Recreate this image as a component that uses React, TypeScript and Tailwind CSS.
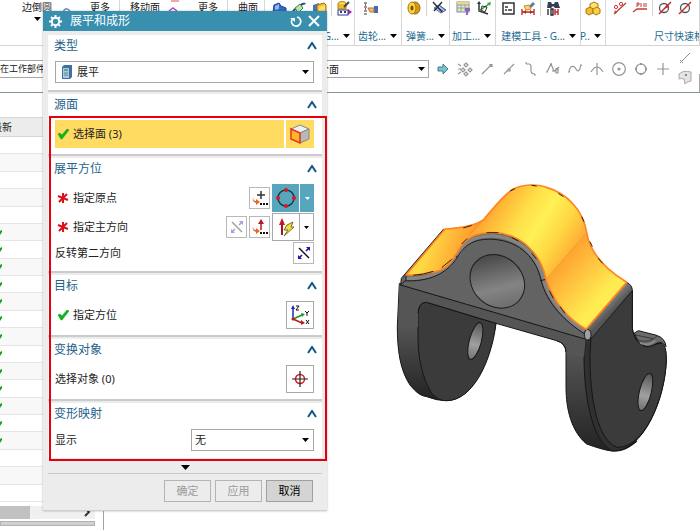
import React from "react";

type Kids = { children?: React.ReactNode };

const ARROW = "M0 0H7L3.5 4Z";

function Caret({ className = "fill-black" }: { className?: string }) {
  return (
    <svg width="7" height="4" viewBox="0 0 7 4" className={`shrink-0 ${className}`} aria-hidden="true">
      <path d={ARROW} />
    </svg>
  );
}

function Glyph({ children, size = 16 }: Kids & { size?: number }) {
  return (
    <svg width={size} height={size} viewBox="0 0 16 16" fill="none" className="shrink-0" aria-hidden="true">
      {children}
    </svg>
  );
}

/* ---------- ribbon ---------- */

const tools: Record<string, React.ReactNode> = {
  拉伸: (
    <>
      <path d="M3 5L8 3L10 6L15 8V12L9 15L2 12Z" fill="#3567c4" stroke="#1c3f91" />
      <path d="M4 6L8 4V9L4 10Z" fill="#8fb8f3" />
    </>
  ),
  扫掠: (
    <>
      <path d="M2 12C4 6 7 12 9 7S13 5 14 3" stroke="#2947a8" strokeWidth="2" />
      <path d="M4 8L9 4L12 8L7 13Z" fill="#c2e0a7" stroke="#3a8a35" />
      <path d="M2 14H8" stroke="#5b42bd" strokeWidth="2" />
    </>
  ),
  块: (
    <>
      <path d="M2 5L8 3V12L2 14Z" fill="#3f73cc" />
      <path d="M6 5L13 3L15 5V12L8 14L6 12Z" fill="#f7bd2a" stroke="#a46f0a" />
      <path d="M8 7V14L14 12V5Z" fill="#ffdd66" />
    </>
  ),
  标准件: (
    <>
      <ellipse cx="6" cy="4" rx="4" ry="2.5" fill="#ffdc55" stroke="#b27e0f" />
      <path d="M2 4V9H10V4" fill="#f0b92d" stroke="#b27e0f" />
      <path d="M8 7L13 2" stroke="#444" strokeWidth="2" />
      <rect x="2" y="10" width="10" height="5" fill="#fff" stroke="#333a86" />
      <path d="M4 12H6M8 12H10" stroke="#3436a0" strokeWidth="2" />
      <path d="M12 9L16 12L12 15Z" fill="#9d25aa" />
    </>
  ),
  齿轮: (
    <>
      <path d="M1 3H4M1 7H4M1 11H4M1 14H4" stroke="#333" />
      <path d="M2 5H3M2 9H3" stroke="#e13a32" strokeWidth="2" />
      <rect x="11" y="6" width="4" height="7" fill="#4769b4" />
      <path d="M5 8H11V12H7Z" fill="#f2bd72" stroke="#a77735" />
    </>
  ),
  弹簧: (
    <>
      <ellipse cx="9" cy="8" rx="5" ry="6" fill="#d69b12" stroke="#93680a" />
      <ellipse cx="6" cy="8" rx="4" ry="6" fill="#ffd23e" stroke="#a2750c" />
      <ellipse cx="6" cy="8" rx="1.5" ry="2.5" fill="#6e4f0b" />
    </>
  ),
  删除弹簧: (
    <>
      <path d="M3 8L10 13L15 10L8 5Z" fill="#b8cbe7" stroke="#4b659c" />
      <path d="M6 7L12 11M9 6L14 10" stroke="#4b659c" />
      <path d="M2 2L11 12M11 2L3 11" stroke="#262e40" strokeWidth="1.4" />
    </>
  ),
  加工表: (
    <>
      <rect x="1" y="2" width="12" height="10" fill="#dbe7d0" stroke="#8a8a8a" />
      <path d="M1 5H13M1 8H13M5 2V12M9 2V12" stroke="#9ba69a" />
      <path d="M1 2H13V4H1Z" fill="#f4d777" />
      <path d="M9 8H14V11H12V15H10V11H9Z" fill="#8c62c2" />
    </>
  ),
  坐标: (
    <>
      <path d="M3 3V11L12 14" stroke="#333" strokeWidth="1.5" />
      <path d="M3 11L13 4" stroke="#2c9a40" strokeWidth="1.5" />
      <path d="M6 6L11 7L9 12L5 10Z" stroke="#333" />
      <path d="M1 4L3 1L5 4Z" fill="#333" />
      <path d="M11 3L15 2L14 6Z" fill="#2eac45" />
    </>
  ),
  属性: (
    <>
      <rect x="3" y="3" width="11" height="11" fill="#fff" stroke="#333" strokeWidth="1.5" />
      <path d="M5 7H8M5 10H7M8 10H12" stroke="#333" strokeWidth="1.5" />
    </>
  ),
  测量: (
    <>
      <path d="M8 7L13 2L15 4L10 9Z" fill="#6277a5" />
      <path d="M4 6L9 5L11 9L6 10Z" fill="#ffd66b" stroke="#c49126" />
      <path d="M2 9V15M14 9V15M2 12H14" stroke="#bd2323" strokeWidth="1.3" />
      <path d="M3 12L6 10V14ZM13 12L10 10V14Z" fill="#bd2323" />
    </>
  ),
  公差查询: (
    <>
      <path d="M3 2H6L7 4H9L10 2H13L15 8H10L8 6L6 8H2Z" fill="#353d55" />
      <path d="M3 9V15M6 9H8V15H6Z" stroke="#222" strokeWidth="1.3" />
      <path d="M10 9V15M13 9V15M10 12H13" stroke="#cb2323" strokeWidth="1.4" />
    </>
  ),
  部件: (
    <>
      <path d="M5 4L9 2L13 4V8L9 10L5 8Z" fill="#ffe073" stroke="#a8780b" />
      <path d="M1 9L5 7L8 9V13L4 15L1 13Z" fill="#f2bd2f" stroke="#a8780b" />
      <path d="M8 9L12 7L15 9V13L11 15L8 13Z" fill="#ffcf3f" stroke="#a8780b" />
    </>
  ),
  尺寸线: (
    <>
      <path d="M2 14L14 3" stroke="#c43a3a" strokeWidth="1.3" />
      <circle cx="4" cy="7" r="1.6" stroke="#c43a3a" />
      <circle cx="9" cy="4" r="1.6" stroke="#c43a3a" />
      <path d="M2 14L3 10L5 13Z" fill="#c43a3a" />
    </>
  ),
  引出线: (
    <>
      <path d="M1 12L5 9H15" stroke="#c43a3a" strokeWidth="1.3" />
      <path d="M5 3V7M5 3H7V5H5M9 3V7M12 3V7M14 3V7" stroke="#c43a3a" />
    </>
  ),
  直径: (
    <>
      <circle cx="7" cy="8" r="4.5" stroke="#555" strokeWidth="1.3" />
      <path d="M2 14L14 2" stroke="#c42b2b" strokeWidth="1.4" />
      <path d="M7 9L12 7L10 4Z" fill="#c42b2b" />
    </>
  ),
  直径线: (
    <>
      <circle cx="8" cy="8" r="4.5" stroke="#555" strokeWidth="1.3" />
      <path d="M2 14L14 2" stroke="#c42b2b" strokeWidth="1.4" />
    </>
  ),
};

function Tool({ name }: { name: string }) {
  return (
    <button type="button" aria-label={name} className="shrink-0">
      <Glyph>{tools[name]}</Glyph>
    </button>
  );
}

function Divider() {
  return <span className="h-4 w-px shrink-0 bg-[#d4d4d4]" />;
}

function Group({ label, width, pad, menu = true, children }: Kids & { label?: string; width: string; pad: string; menu?: boolean }) {
  return (
    <div className={`flex flex-col justify-between overflow-hidden border-r border-[#d8d8d8] pb-px ${width}`}>
      <div className={`flex items-start gap-1 ${pad}`}>{children}</div>
      {label && (
        <button
          type="button"
          className={`flex items-center gap-1 whitespace-nowrap leading-4 text-[#1d6b92] ${menu ? "justify-end pr-1" : "pl-12"}`}
        >
          {label}
          {menu && <Caret />}
        </button>
      )}
    </div>
  );
}

function Ribbon() {
  return (
    <header className="flex h-[46px] border-b border-[#d4d4d4] text-[10px] leading-[14px] text-[#222]">
      <Group width="w-[120px] shrink-0" pad="pl-[22px]">
        <button type="button" className="flex flex-col items-center gap-[3px] whitespace-nowrap">
          边倒圆
          <Caret />
        </button>
        <svg width="30" height="14" viewBox="0 0 30 14" fill="none" aria-hidden="true">
          <path d="M7 12Q10 6 14 11" stroke="#6f82bd" strokeWidth="1.5" />
        </svg>
        <button type="button" className="whitespace-nowrap">更多</button>
      </Group>
      <Group width="w-[108px] shrink-0" pad="pl-2.5">
        <button type="button" className="whitespace-nowrap">移动面</button>
        <svg width="30" height="14" viewBox="0 0 30 14" fill="none" aria-hidden="true">
          <path d="M5 11L9 8L13 11" stroke="#a94cc0" strokeWidth="1.5" />
          <path d="M7 1H15" stroke="#d25555" />
        </svg>
        <button type="button" className="whitespace-nowrap">更多</button>
      </Group>
      <Group width="w-[37px] shrink-0" pad="pl-2.5">
        <button type="button" className="whitespace-nowrap">曲面</button>
      </Group>
      <Group label="G..." width="w-[90px] shrink-0" pad="pl-1.5">
        <Tool name="拉伸" />
        <Tool name="扫掠" />
        <Tool name="块" />
        <Divider />
        <Tool name="标准件" />
      </Group>
      <Group label="齿轮..." width="w-[47px] shrink-0" pad="pl-2">
        <Tool name="齿轮" />
      </Group>
      <Group label="弹簧..." width="w-[48px] shrink-0" pad="pl-1">
        <Tool name="弹簧" />
        <Divider />
        <Tool name="删除弹簧" />
      </Group>
      <Group label="加工..." width="w-[46px] shrink-0" pad="pl-1.5">
        <Tool name="加工表" />
        <Tool name="坐标" />
      </Group>
      <Group label="建模工具 - G..." width="w-[85px] shrink-0" pad="pl-1">
        <Tool name="属性" />
        <Tool name="测量" />
        <Divider />
        <Tool name="公差查询" />
      </Group>
      <Group label="P.." width="w-[25px] shrink-0" pad="pl-1">
        <Tool name="部件" />
      </Group>
      <Group label="尺寸快速格式化" width="min-w-0 flex-1" pad="pl-1.5" menu={false}>
        <Tool name="尺寸线" />
        <Tool name="引出线" />
        <Divider />
        <Tool name="直径" />
        <Tool name="直径线" />
      </Group>
    </header>
  );
}

/* ---------- selection bar ---------- */

const snaps: [string, React.ReactNode][] = [
  ["捕捉点", <path d="M1 3L4 5M1 8H4M1 13L4 11M9 2L11 4L9 6L7 4ZM6 7L8 9L6 11L4 9ZM13 7L15 9L13 11L11 9ZM9 11L11 13L9 15L7 13Z" />],
  ["端点", <path d="M3 13L12 4M11 3.5H13V5.5H11Z" />],
  ["中点", <path d="M3 13L13 3M7 8H9V10H7Z" />],
  ["控制点", <path d="M3 3H6Q8 3 8 6V10Q8 13 12 13M11 14H13M2 2H4" />],
  ["极点", <path d="M2 11L6 3L9 10L14 6M1 11H3M5 3H7M7 10H11M11 7V12H13V7" />],
  ["样条点", <path d="M2 11C3 4 7 4 9 8S13 9 14 4M1 11H3M13 4H15" />],
  ["交点", <path d="M2 11Q8 1 14 11M8 2V14" />],
  ["圆心", <><circle cx="8" cy="8" r="6.3" /><circle cx="8" cy="8" r="1" fill="#8c8c8c" /></>],
  ["象限点", <><circle cx="8" cy="8" r="5" /><path d="M8 2V4M8 12V14M2 8H4M12 8H14" strokeWidth="2.4" /></>],
  ["现有点", <path d="M8 2V14M2 8H14" />],
];

function SelectionBar() {
  return (
    <div className="flex h-[47px] items-center overflow-hidden border-b border-[#839496] text-[10px] text-[#222]">
      <select aria-label="选择范围" className="h-[18px] w-[300px] shrink-0 appearance-none border-y border-[#a6a6a6] bg-white text-[9px]">
        <option>在工作部件内</option>
      </select>
      <div className="relative ml-1 flex shrink-0 items-center">
        <select aria-label="面规则" className="h-[18px] w-[125px] appearance-none border border-[#a6a6a6] bg-white pl-1">
          <option>单个面</option>
        </select>
        <Caret className="pointer-events-none absolute right-1 fill-black" />
      </div>
      <div className="ml-1.5 flex items-center gap-1.5">
        <button type="button" aria-label="应用规则">
          <Glyph>
            <path d="M3 6H8V3L13 8L8 13V10H3Z" fill="#7ec0cc" stroke="#3f7f92" />
          </Glyph>
        </button>
        {snaps.map(([name, art]) => (
          <button type="button" key={name} aria-label={name}>
            <Glyph>
              <g stroke="#959595" strokeWidth="1.2">{art}</g>
            </Glyph>
          </button>
        ))}
        <div className="flex flex-col gap-[3px] pb-1">
          <button type="button" aria-label="曲线上的点">
            <Glyph>
              <path d="M3 13L13 3M3 10L6 13" stroke="#8c8c8c" />
            </Glyph>
          </button>
          <button type="button" aria-label="面上的点">
            <Glyph>
              <path d="M2 5Q6 1 14 3V12Q9 13 8 15L7 10Q4 9 2 10Z" fill="#e4e4e4" stroke="#aaa" />
              <circle cx="9" cy="6" r="1" fill="#666" />
            </Glyph>
          </button>
        </div>
        <button type="button" aria-label="更多捕捉选项" className="mt-7 h-[18px] w-5 shrink-0 border border-[#a6a6a6]" />
      </div>
    </div>
  );
}

/* ---------- part navigator ---------- */

function Navigator() {
  const rows = Array.from({ length: 21 }, (_, i) => i);
  return (
    <aside className="flex w-[104px] shrink-0 flex-col border-r border-[#9aa3a8] pt-6 text-[10px]">
      <div className="h-5 shrink-0 border-y border-[#d6d6d6] bg-[#ececec] leading-[18px] text-[#222]">
        <span className="-ml-2 block">最新</span>
      </div>
      <ul className="flex flex-1 flex-col">
        {rows.map((i) => (
          <li key={i} className="flex flex-1 items-center border-b border-[#e6e6e6] even:bg-[#f8f8f8]">
            {i > 4 && i < 18 && (
              <svg width="3" height="5" viewBox="0 0 3 5" aria-hidden="true">
                <path d="M0 1L2 0L2 2L0 5Z" fill="#0aa514" />
              </svg>
            )}
          </li>
        ))}
      </ul>
      <div className="mt-1 mr-2 flex h-[13px] items-center justify-between bg-[#f0f0f0]">
        <span className="h-full w-[30px] bg-[#c1c1c1]" />
        <svg width="12" height="9" viewBox="0 0 12 9" fill="none" aria-hidden="true">
          <path d="M2 0L6 4L2 8" stroke="#333" strokeWidth="2" />
        </svg>
      </div>
      <div className="mt-0.5 mr-2 mb-1 h-[5px] border border-[#b2b2b2] bg-[#d0d0d0]" />
    </aside>
  );
}

/* ---------- 3D view ---------- */

function Bracket() {
  return (
    <svg width="290" height="290" viewBox="0 0 870 870" fill="none" strokeLinejoin="round" role="img" aria-label="支架模型">
      <defs>
        <linearGradient id="leg" x1="0" y1="340" x2="0" y2="840" gradientUnits="userSpaceOnUse">
          <stop stopColor="#4c4c4c" />
          <stop offset=".35" stopColor="#5a5a5a" />
          <stop offset="1" stopColor="#242424" />
        </linearGradient>
        <linearGradient id="legL" x1="0" y1="340" x2="0" y2="690" gradientUnits="userSpaceOnUse">
          <stop stopColor="#484848" />
          <stop offset=".3" stopColor="#5a5a5a" />
          <stop offset="1" stopColor="#222" />
        </linearGradient>
        <linearGradient id="wingL" x1="110" y1="235" x2="225" y2="275" gradientUnits="userSpaceOnUse">
          <stop stopColor="#ffd944" />
          <stop offset="1" stopColor="#ff9a2c" />
        </linearGradient>
        <linearGradient id="crown" x1="265" y1="130" x2="545" y2="310" gradientUnits="userSpaceOnUse">
          <stop stopColor="#ff9c2c" />
          <stop offset=".35" stopColor="#ffe048" />
          <stop offset=".52" stopColor="#fff056" />
          <stop offset=".7" stopColor="#ffd944" />
          <stop offset="1" stopColor="#ff9c2e" />
        </linearGradient>
        <linearGradient id="wingR" x1="520" y1="265" x2="640" y2="375" gradientUnits="userSpaceOnUse">
          <stop stopColor="#ffa330" />
          <stop offset="1" stopColor="#ffec52" />
        </linearGradient>
        <linearGradient id="bore" x1="250" y1="290" x2="395" y2="390" gradientUnits="userSpaceOnUse">
          <stop stopColor="#474747" />
          <stop offset=".6" stopColor="#848484" />
          <stop offset="1" stopColor="#6a6a6a" />
        </linearGradient>
        <linearGradient id="pin" x1="0" y1="0" x2="0" y2="1">
          <stop stopColor="#555" />
          <stop offset=".6" stopColor="#a0a0a0" />
          <stop offset="1" stopColor="#707070" />
        </linearGradient>
        <linearGradient id="edge" x1="640" y1="400" x2="665" y2="425" gradientUnits="userSpaceOnUse">
          <stop stopColor="#8a8a8a" />
          <stop offset="1" stopColor="#555" />
        </linearGradient>
      </defs>
      {/* left leg */}
      <path d="M28 340L22 470C22 540 30 600 60 645C80 670 95 678 110 680Q140 692 170 692C250 690 300 570 318 458L110 380Z" fill="url(#legL)" stroke="#161616" strokeWidth="3" />
      <path d="M84 430Q86 395 110 397L318 460C305 570 250 692 170 692C150 692 140 685 125 670C95 620 84 560 84 500Z" fill="#3b3b3b" stroke="#161616" strokeWidth="3" />
      <ellipse cx="256" cy="513" rx="18" ry="57" transform="rotate(15 256 513)" fill="url(#pin)" stroke="#161616" strokeWidth="3" />
      {/* right leg */}
      <path d="M500 512Q528 520 528 550V650C528 720 545 785 590 822Q640 840 665 843C700 846 720 830 740 815L600 500Z" fill="url(#leg)" stroke="#161616" strokeWidth="3" />
      <path d="M588 500L727 360V470C728 490 735 500 745 512L800 520Q829 510 829 570C825 690 760 845 668 843C610 820 582 690 582 560Z" fill="#303030" stroke="#161616" strokeWidth="3" />
      <path d="M603 500L727 362V470C727 500 745 525 770 530C800 530 829 490 829 570C825 690 760 835 682 832C620 810 600 680 600 560Z" fill="#3b3b3b" stroke="#161616" strokeWidth="3" />
      <path d="M733 489L745 482L800 496Q826 505 828 530Q815 508 796 522Q770 540 745 516Z" fill="#6b6b6b" stroke="#161616" strokeWidth="3" />
      <path d="M737 495L790 506M740 508Q765 520 788 508L803 498" stroke="#222" strokeWidth="2" />
      <path d="M750 519Q775 530 796 512" stroke="#8c8c8c" strokeWidth="5" />
      <ellipse cx="766" cy="666" rx="18" ry="57" transform="rotate(14 766 666)" fill="url(#pin)" stroke="#161616" strokeWidth="3" />
      {/* lower band and front plate */}
      <path d="M28 340L588 500L582 560L528 550Q528 520 500 512L318 460L110 397Q86 395 84 430V470H24Z" fill="#555" />
      <path d="M84 430Q86 395 110 397L318 460L500 512Q528 520 528 545" stroke="#161616" strokeWidth="3" />
      <path d="M32 345L40 318L48 315C120 320 170 300 200 250C225 200 260 188 310 188C400 192 455 260 468 328C490 400 540 450 588 478L595 510Z" fill="#636363" stroke="#161616" strokeWidth="3" />
      <path d="M46 325C120 328 172 305 203 254C230 207 265 197 310 198C395 202 448 265 461 330C480 395 530 450 583 483" stroke="#858585" strokeWidth="11" />
      <path d="M40 332C115 337 170 312 202 262C230 212 270 206 310 208C395 214 440 270 453 330C470 400 525 455 585 492" stroke="#1c1c1c" strokeWidth="3" />
      <path d="M190 250L204 263M450 332L470 328" stroke="#1c1c1c" strokeWidth="3" />
      <ellipse cx="322" cy="334" rx="87" ry="75" transform="rotate(42 322 334)" fill="url(#bore)" stroke="#1c1c1c" strokeWidth="3" />
      {/* rounded outer edges */}
      <path d="M32 345L34 325L160 178L168 180L48 316V330Z" fill="#666" stroke="#1c1c1c" strokeWidth="3" />
      <path d="M588 478L710 337Q727 345 727 362L607 502L595 510Q580 500 588 478Z" fill="url(#edge)" stroke="#1c1c1c" strokeWidth="3" />
      <ellipse cx="593" cy="494" rx="10" ry="16" fill="#a0a0a0" stroke="#1c1c1c" strokeWidth="3" />
      {/* highlighted faces */}
      <path d="M48 315L165 177C205 175 250 170 280 150L237 200Q212 222 200 250C175 290 160 303 120 308Q90 317 48 315Z" fill="url(#wingL)" />
      <path d="M280 150C310 115 340 75 370 57C400 42 440 42 470 52C530 70 580 120 590 188L468 328C455 260 400 190 310 188Q265 188 233 204L235 196Z" fill="url(#crown)" />
      <path d="M590 188C600 250 650 300 710 337L588 478C540 450 490 400 468 328Z" fill="url(#wingR)" />
      <path d="M280 150L235 198M590 188L468 328" stroke="#e98a20" strokeWidth="2" />
      <path d="M48 315L165 177C205 175 250 170 280 150C310 115 340 75 370 57C400 42 440 42 470 52C530 70 580 120 590 188C600 250 650 300 710 337L588 478C540 450 490 400 468 328C455 260 400 190 310 188C260 188 225 200 200 250C175 290 160 303 120 308Q90 317 48 315Z" stroke="#ff8420" strokeWidth="5" />
      <path d="M70 316Q100 314 130 304M155 293L185 268M215 222L232 205M290 188H325M365 203L385 213M425 250L440 268M478 362L490 385M510 410L525 430M220 174L245 166M360 63L375 56M425 46L440 48M505 70L520 80M575 140L582 155M600 215L607 230M625 265L638 280" stroke="#2e2410" strokeWidth="3" />
    </svg>
  );
}

/* ---------- dialog ---------- */

function Section({ title, className = "mb-0.5 border-b-2 pb-1.5", children }: Kids & { title: string; className?: string }) {
  return (
    <section className={`border-[#cbcbcb] bg-white pr-2 pl-[7px] ${className}`}>
      <h2>
        <button type="button" className="-ml-px mb-1 flex h-[22px] w-full items-center justify-between text-[12px] text-[#1d628a]">
          {title}
          <svg width="10" height="8" viewBox="0 0 10 8" fill="none" className="-mr-1" aria-hidden="true">
            <path d="M1 7L5 1L9 7" stroke="#135780" strokeWidth="2" />
          </svg>
        </button>
      </h2>
      {children}
    </section>
  );
}

function Check() {
  return (
    <svg width="12" height="12" viewBox="0 0 12 12" className="shrink-0" aria-hidden="true">
      <path d="M1 6L3 5L5 7L10 1L12 2L5 11H4Z" fill="#10b51b" stroke="#0a9a14" strokeWidth=".5" />
    </svg>
  );
}

function Star() {
  return (
    <svg width="12" height="12" viewBox="0 0 12 12" className="shrink-0" aria-hidden="true">
      <path d="M6 1V11M1 4L11 8M2 10L10 2" stroke="#d9111b" strokeWidth="2" />
    </svg>
  );
}

function Row({ mark, label, children }: Kids & { mark?: React.ReactNode; label: string }) {
  return (
    <div className="flex items-center gap-0.5">
      <span className="flex flex-1 items-center gap-1">
        {mark && <span className="ml-0.5">{mark}</span>}
        {label}
      </span>
      {children}
    </div>
  );
}

function ToolButton({ label, big, dim, children }: Kids & { label: string; big?: boolean; dim?: boolean }) {
  return (
    <button
      type="button"
      aria-label={label}
      disabled={dim}
      className={`flex shrink-0 items-center justify-center border bg-white ${big ? "size-7 border-[#a9a9a9]" : "h-[22px] w-[21px] border-[#b8b8b8]"}`}
    >
      {children}
    </button>
  );
}

function Flip({ dim }: { dim?: boolean }) {
  return (
    <Glyph>
      <g opacity={dim ? 0.4 : 1}>
        <path d="M3 3L13 13" stroke="#111" strokeWidth="1.4" />
        <path d="M10 6L13 3M6 10L3 13" stroke="#1717a5" strokeWidth="1.6" />
        <path d="M10 2H14V6ZM2 10V14H6Z" fill="#1717a5" />
      </g>
    </Glyph>
  );
}

function Dialog() {
  return (
    <div
      role="dialog"
      aria-label="展平和成形"
      className="absolute top-[11px] left-[43px] w-[284px] border-b border-[#cfcfcf] bg-[#ececec] text-[11px] leading-4 text-[#222] shadow-[0_0_2px_rgba(0,0,0,0.3)]"
    >
      <div className="flex h-5 items-center bg-[#388fae] pr-[7px] pl-1.5 text-[12px] text-white">
        <svg width="13" height="13" viewBox="0 0 13 13" fill="none" aria-hidden="true">
          <circle cx="6.5" cy="6.5" r="3.7" stroke="white" strokeWidth="2" />
          <path d="M6.5 0V2M6.5 11V13M0 6.5H2M11 6.5H13M2 2L3.4 3.4M9.6 9.6L11 11M11 2L9.6 3.4M3.4 9.6L2 11" stroke="white" strokeWidth="2" />
        </svg>
        <h1 className="flex-1 pl-2">展平和成形</h1>
        <button type="button" aria-label="重置" className="mr-1.5">
          <svg width="12" height="12" viewBox="0 0 12 12" fill="none" className="block" aria-hidden="true">
            <path d="M2 4.5A4.6 4.6 0 1 0 7 2" stroke="white" strokeWidth="1.7" />
            <path d="M0 3H5V7Z" fill="white" />
          </svg>
        </button>
        <button type="button" aria-label="关闭">
          <svg width="12" height="12" viewBox="0 0 12 12" fill="none" className="block" aria-hidden="true">
            <path d="M1 1L11 11M11 1L1 11" stroke="white" strokeWidth="2" />
          </svg>
        </button>
      </div>
      <div className="px-[5px] pt-1">
        <Section title="类型" className="mb-0.5 border-b-2 pb-[7px]">
          <div className="relative flex items-center">
            <svg width="12" height="14" viewBox="0 0 12 14" className="pointer-events-none absolute left-1.5" aria-hidden="true">
              <path d="M1 2L3 0H11V12L9 14H1Z" fill="#416f9f" />
              <path d="M2 3H8V13H2Z" fill="#adc9e0" />
              <path d="M3 4H7V6H3Z" fill="#47b587" />
              <path d="M3 8H7M3 10H7" stroke="#5c83ab" />
            </svg>
            <select aria-label="类型" className="h-[22px] w-full appearance-none border border-[#a6a6a6] bg-white pl-[21px]">
              <option>展平</option>
            </select>
            <Caret className="pointer-events-none absolute right-[5px] fill-black" />
          </div>
        </Section>
        <Section title="源面">
          <div className="flex gap-0.5">
            <button type="button" className="flex h-7 flex-1 items-center gap-1 bg-[#ffdb62] pl-0.5">
              <Check />
              选择面 (3)
            </button>
            <button type="button" aria-label="面" className="flex size-7 items-center justify-center bg-[#ffdb62]">
              <svg width="20" height="20" viewBox="0 0 20 20" aria-hidden="true">
                <path d="M1 5L10 1L19 5L10 9Z" fill="#f0f0f0" stroke="#888" />
                <path d="M10 9L19 5V15L10 19Z" fill="#b8b8bb" stroke="#888" />
                <path d="M1 5L10 9V19L1 15Z" fill="#ffb82b" stroke="#e9341c" strokeWidth="1.5" />
              </svg>
            </button>
          </div>
        </Section>
        <Section title="展平方位" className="mb-0.5 border-b-2 pb-[7px]">
          <div className="flex flex-col gap-px">
            <Row mark={<Star />} label="指定原点">
              <ToolButton label="点对话框">
                <Glyph>
                  <path d="M9 1V9M5 5H13" stroke="#333" strokeWidth="1.5" />
                  <path d="M1 7Q1 11 4 11V9L8 12L4 15V13Q0 12 1 7Z" fill="#ea6526" />
                  <path d="M8 14H10M11 14H13M14 14H16" stroke="#111" strokeWidth="2" />
                </Glyph>
              </ToolButton>
              <div className="flex h-7 bg-[#58a6be] text-white">
                <button type="button" aria-label="象限点" className="flex w-7 items-center justify-center border-r border-white">
                  <svg width="20" height="20" viewBox="0 0 20 20" aria-hidden="true">
                    <circle cx="10" cy="10" r="8" fill="none" stroke="#173743" strokeWidth="1.5" />
                    <g fill="#d81520">
                      <circle cx="10" cy="2" r="2" />
                      <circle cx="10" cy="18" r="2" />
                      <circle cx="2" cy="10" r="2" />
                      <circle cx="18" cy="10" r="2" />
                    </g>
                  </svg>
                </button>
                <button type="button" aria-label="更多点选项" className="flex w-3.5 items-center justify-center">
                  <svg width="5" height="3" viewBox="0 0 7 4" className="fill-white" aria-hidden="true"><path d={ARROW} /></svg>
                </button>
              </div>
            </Row>
            <Row mark={<Star />} label="指定主方向">
              <ToolButton label="反向" dim>
                <Flip dim />
              </ToolButton>
              <ToolButton label="矢量对话框">
                <Glyph>
                  <path d="M9 11V4" stroke="#b81822" strokeWidth="1.5" />
                  <path d="M6 5L9 0L12 5Z" fill="#b81822" />
                  <path d="M1 7Q1 11 4 11V9L8 12L4 15V13Q0 12 1 7Z" fill="#ea6526" />
                  <path d="M8 14H10M11 14H13M14 14H16" stroke="#111" strokeWidth="2" />
                </Glyph>
              </ToolButton>
              <div className="flex h-7 border border-[#a9a9a9] bg-white">
                <button type="button" aria-label="自动判断的矢量" className="flex w-[27px] items-center justify-center border-r border-[#a9a9a9]">
                  <svg width="20" height="20" viewBox="0 0 20 20" aria-hidden="true">
                    <path d="M6 18V6" stroke="#9d1720" strokeWidth="2" />
                    <path d="M3 8L6 1L9 8Z" fill="#c61520" />
                    <path d="M11 8L17 5L15 10L18 10L8 19L12 13H8Z" fill="#f3dc43" stroke="#77711f" />
                  </svg>
                </button>
                <button type="button" aria-label="更多矢量选项" className="flex w-[13px] items-center justify-center">
                  <svg width="5" height="3" viewBox="0 0 7 4" aria-hidden="true"><path d={ARROW} /></svg>
                </button>
              </div>
            </Row>
            <Row label="反转第二方向">
              <ToolButton label="反转第二方向">
                <Flip />
              </ToolButton>
            </Row>
          </div>
        </Section>
        <Section title="目标">
          <Row mark={<Check />} label="指定方位">
            <ToolButton label="坐标系" big>
              <svg width="20" height="20" viewBox="0 0 20 20" fill="none" aria-hidden="true">
                <path d="M3 14V3" stroke="#2424b8" strokeWidth="1.5" />
                <path d="M1 4L3 0L5 4Z" fill="#2424b8" />
                <path d="M3 14L12 10" stroke="#21952a" strokeWidth="1.5" />
                <path d="M11 8L15 9L12 12Z" fill="#21952a" />
                <path d="M3 14L12 18" stroke="#b61b1b" strokeWidth="1.5" />
                <path d="M11 15L15 18L11 20Z" fill="#b61b1b" />
                <circle cx="3" cy="14" r="1.5" fill="#c11616" />
                <path d="M6 1H9L6 5H9M15 6L17 8L19 6M17 8V11M16 15L19 19M19 15L16 19" stroke="#111" />
              </svg>
            </ToolButton>
          </Row>
        </Section>
        <Section title="变换对象">
          <Row label="选择对象 (0)">
            <ToolButton label="选择对象" big>
              <Glyph>
                <circle cx="8" cy="8" r="4.5" stroke="#dd1b20" strokeWidth="1.5" />
                <path d="M8 0V16M0 8H16" stroke="#222" strokeWidth="1.2" />
              </Glyph>
            </ToolButton>
          </Row>
        </Section>
        <Section title="变形映射" className="pb-[7px]">
          <div className="flex items-center">
            <label htmlFor="display" className="flex-1">显示</label>
            <div className="relative flex items-center">
              <select id="display" className="h-[22px] w-[123px] appearance-none border border-[#a6a6a6] bg-white pl-[3px]">
                <option>无</option>
              </select>
              <Caret className="pointer-events-none absolute right-[5px] fill-black" />
            </div>
          </div>
        </Section>
        <button type="button" aria-label="显示更少" className="flex h-4 w-full items-center justify-center border-b border-[#cbcbcb] pt-1">
          <svg width="9" height="5" viewBox="0 0 9 5" aria-hidden="true"><path d="M0 0H9L4.5 5Z" /></svg>
        </button>
      </div>
      <div className="flex justify-end gap-1 pt-1.5 pr-3.5 pb-2">
        <button type="button" disabled className="h-[22px] w-[47px] border border-[#b4b4b4] text-[#9b9b9b]">确定</button>
        <button type="button" disabled className="h-[22px] w-[47px] border border-[#b4b4b4] text-[#9b9b9b]">应用</button>
        <button type="button" className="h-[22px] w-[47px] border border-[#a0a0a0] bg-[#d4d4d4] text-black">取消</button>
      </div>
    </div>
  );
}

export default function App() {
  return (
    <div
      lang="zh-CN"
      className="relative flex h-screen flex-col overflow-hidden bg-white font-['Noto_Sans','Noto_Sans_CJK_SC',sans-serif]"
    >
      <Ribbon />
      <SelectionBar />
      <div className="flex min-h-0 flex-1">
        <Navigator />
        <main className="flex flex-1 items-start justify-end pt-[77px] pr-5">
          <Bracket />
        </main>
      </div>
      <Dialog />
      <div className="pointer-events-none absolute top-[116px] left-[49px] h-[345px] w-[278px] border-2 border-[#e6000c]" />
    </div>
  );
}
